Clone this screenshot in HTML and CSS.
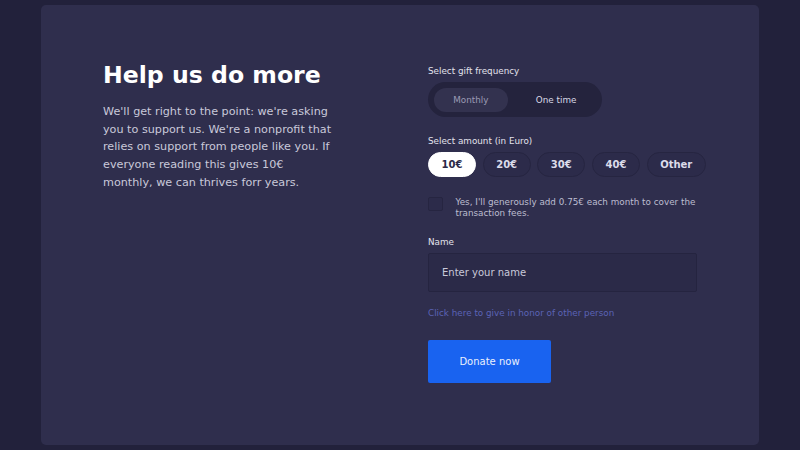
FILE: index.html
```html
<!DOCTYPE html>
<html lang="en">
<head>
<meta charset="utf-8">
<title>Help us do more</title>
<link rel="stylesheet" href="styles.css">
</head>
<body>
<main class="card">
  <section class="intro">
    <h1 class="title">Help us do more</h1>
    <p class="lead">We'll get right to the point: we're asking you to support us. We're a nonprofit that relies on support from people like you. If everyone reading this gives 10€ monthly, we can thrives forr years.</p>
  </section>
  <form class="form">
    <div class="label">Select gift frequency</div>
    <div class="toggle">
      <span class="seg seg-active">Monthly</span>
      <span class="seg">One time</span>
    </div>
    <div class="label label-amount">Select amount (in Euro)</div>
    <div class="amounts">
      <span class="amount amount-active">10€</span>
      <span class="amount">20€</span>
      <span class="amount">30€</span>
      <span class="amount">40€</span>
      <span class="amount">Other</span>
    </div>
    <label class="check">
      <span class="box"></span>
      <span class="check-text">Yes, I'll generously add 0.75€ each month to cover the transaction fees.</span>
    </label>
    <div class="label label-name">Name</div>
    <div class="input">Enter your name</div>
    <a class="link">Click here to give in honor of other person</a>
    <div class="button">Donate now</div>
  </form>
</main>
</body>
</html>
```
FILE: styles.css
```css
* { box-sizing: border-box; }
html, body { margin: 0; height: 100%; }
body {
  background: #22213b;
  font-family: "DejaVu Sans", sans-serif;
  padding: 5px 41px;
}
.card {
  background: #2f2e4d;
  border-radius: 5px;
  height: 440px;
  padding: 57px 62px 0;
  display: grid;
  grid-template-columns: minmax(0, 1fr) minmax(0, 1fr);
  column-gap: 56px;
  align-items: start;
}
.title {
  margin: 0;
  color: #ffffff;
  font-size: 23.6px;
  font-weight: bold;
  line-height: 27.5px;
}
.lead {
  margin: 13.8px 0 0;
  width: 233px;
  color: #c9c9da;
  font-size: 11.2px;
  line-height: 17.6px;
}
.form {
  margin-top: 4px;
  display: flex;
  flex-direction: column;
  align-items: flex-start;
}
.label {
  color: #e2e2ec;
  font-size: 8.8px;
  line-height: 10.3px;
}
.toggle {
  margin-top: 6px;
  display: flex;
  gap: 9px;
  padding: 5.5px 6px;
  background: #24233d;
  border-radius: 18px;
}
.seg {
  height: 24px;
  padding: 0 19.2px;
  display: flex;
  align-items: center;
  font-size: 8.8px;
  color: #d9d9e6;
  border-radius: 12px;
}
.seg-active {
  background: #33324f;
  color: #9b9bb4;
}
.label-amount { margin-top: 18.4px; }
.amounts {
  margin-top: 6px;
  display: flex;
  gap: 6.8px;
}
.amount {
  height: 25px;
  padding: 0 12.5px;
  display: flex;
  align-items: center;
  border: 1px solid #262541;
  background: #2c2b4a;
  border-radius: 13px;
  color: #dcdcea;
  font-size: 10px;
  font-weight: bold;
}
.amount-active {
  background: #ffffff;
  border-color: #ffffff;
  color: #2b2a48;
}
.check {
  margin-top: 20px;
  width: 100%;
  display: flex;
  align-items: flex-start;
  gap: 13px;
}
.box {
  flex: none;
  width: 14.5px;
  height: 14px;
  border: 1px solid #262541;
  background: #2c2b4a;
  border-radius: 2px;
}
.check-text {
  flex: 1;
  min-width: 0;
  color: #bdbdd0;
  font-size: 8.8px;
  line-height: 11.5px;
}
.label-name { margin-top: 17.5px; }
.input {
  margin-top: 5.5px;
  width: 100%;
  height: 38.4px;
  display: flex;
  align-items: center;
  padding: 0 13px;
  background: #2b2a48;
  border: 1px solid #252440;
  border-radius: 2px;
  color: #c9c9da;
  font-size: 10px;
}
.link {
  margin-top: 16px;
  color: #5b63b5;
  font-size: 8.8px;
  line-height: 10.3px;
}
.button {
  margin-top: 22.5px;
  width: 123px;
  height: 43px;
  display: flex;
  align-items: center;
  justify-content: center;
  background: #1963f0;
  border-radius: 2px;
  color: #eaf0fd;
  font-size: 10px;
}
```
